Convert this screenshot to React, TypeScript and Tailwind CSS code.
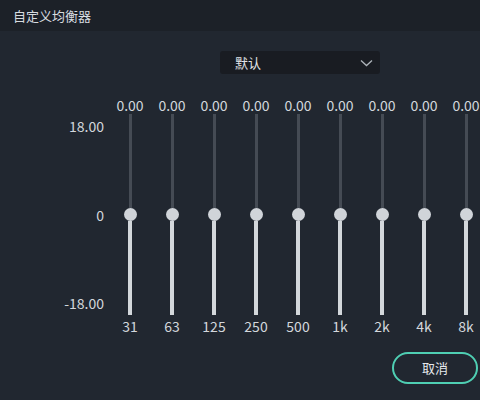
import { useState } from "react";

const BANDS = ["31", "63", "125", "250", "500", "1k", "2k", "4k", "8k"];

const font = {
  fontFamily: '"Noto Sans CJK SC", "Noto Sans", sans-serif',
};

// 单个频段推子：上半段暗色，下半段亮色，中间圆形滑块
const BandSlider = ({ label, value }: { label: string; value: number }) => {
  return (
    <div className="w-[42px] shrink-0 flex flex-col items-center">
      <div className="h-[18px] text-[14px] leading-[18px] text-[#d3d7dc] whitespace-nowrap">
        {value.toFixed(2)}
      </div>
      <div className="h-[201px] w-[13px] flex flex-col items-center">
        <div className="w-[3px] flex-1 bg-[#454b54]" />
        <div className="w-[13px] h-[13px] rounded-full bg-[#d0d4d9] shrink-0" />
        <div className="w-[4px] flex-1 bg-[#d3d7db]" />
      </div>
      <div className="h-[22px] text-[14px] leading-[22px] text-[#d3d7dc]">
        {label}
      </div>
    </div>
  );
};

const App = () => {
  const [values] = useState(BANDS.map(() => 0));

  return (
    <div
      className="w-[480px] h-[400px] bg-[#212730] flex flex-col overflow-hidden"
      style={font}
    >
      {/* 标题栏 */}
      <div className="h-[31px] shrink-0 bg-[#1c2128] flex items-center px-[13px]">
        <span className="text-[13px] text-[#d8dce0]">自定义均衡器</span>
      </div>

      {/* 预设下拉 */}
      <div className="flex pl-[220px] pt-[20px]">
        <button className="w-[160px] h-[23px] rounded-[3px] bg-[#191c22] flex items-center justify-between pl-[15px] pr-[7px]">
          <span className="text-[13px] text-[#e2e5e8]">默认</span>
          <svg width="13" height="8" viewBox="0 0 13 8" fill="none">
            <path
              d="M1 1.5 6.5 6.5 12 1.5"
              stroke="#aeb4ba"
              strokeWidth="1.3"
            />
          </svg>
        </button>
      </div>

      {/* 推子区域 */}
      <div className="flex pt-[22px]">
        <div className="w-[104px] shrink-0 pt-[18px]">
          <div className="h-[201px] py-[3px] flex flex-col justify-between items-end text-[14px] leading-[18px] text-[#d3d7dc]">
            <span>18.00</span>
            <span>0</span>
            <span>-18.00</span>
          </div>
        </div>
        <div className="flex pl-[5px]">
          {BANDS.map((band, i) => (
            <BandSlider key={band} label={band} value={values[i]} />
          ))}
        </div>
      </div>

      {/* 底部按钮 */}
      <div className="flex justify-end pr-[2px] pt-[15px]">
        <button className="w-[86px] h-[32px] rounded-full border-2 border-[#4fcfb3] text-[13px] text-[#e6e9ec]">
          取消
        </button>
      </div>
    </div>
  );
};

export default App;
